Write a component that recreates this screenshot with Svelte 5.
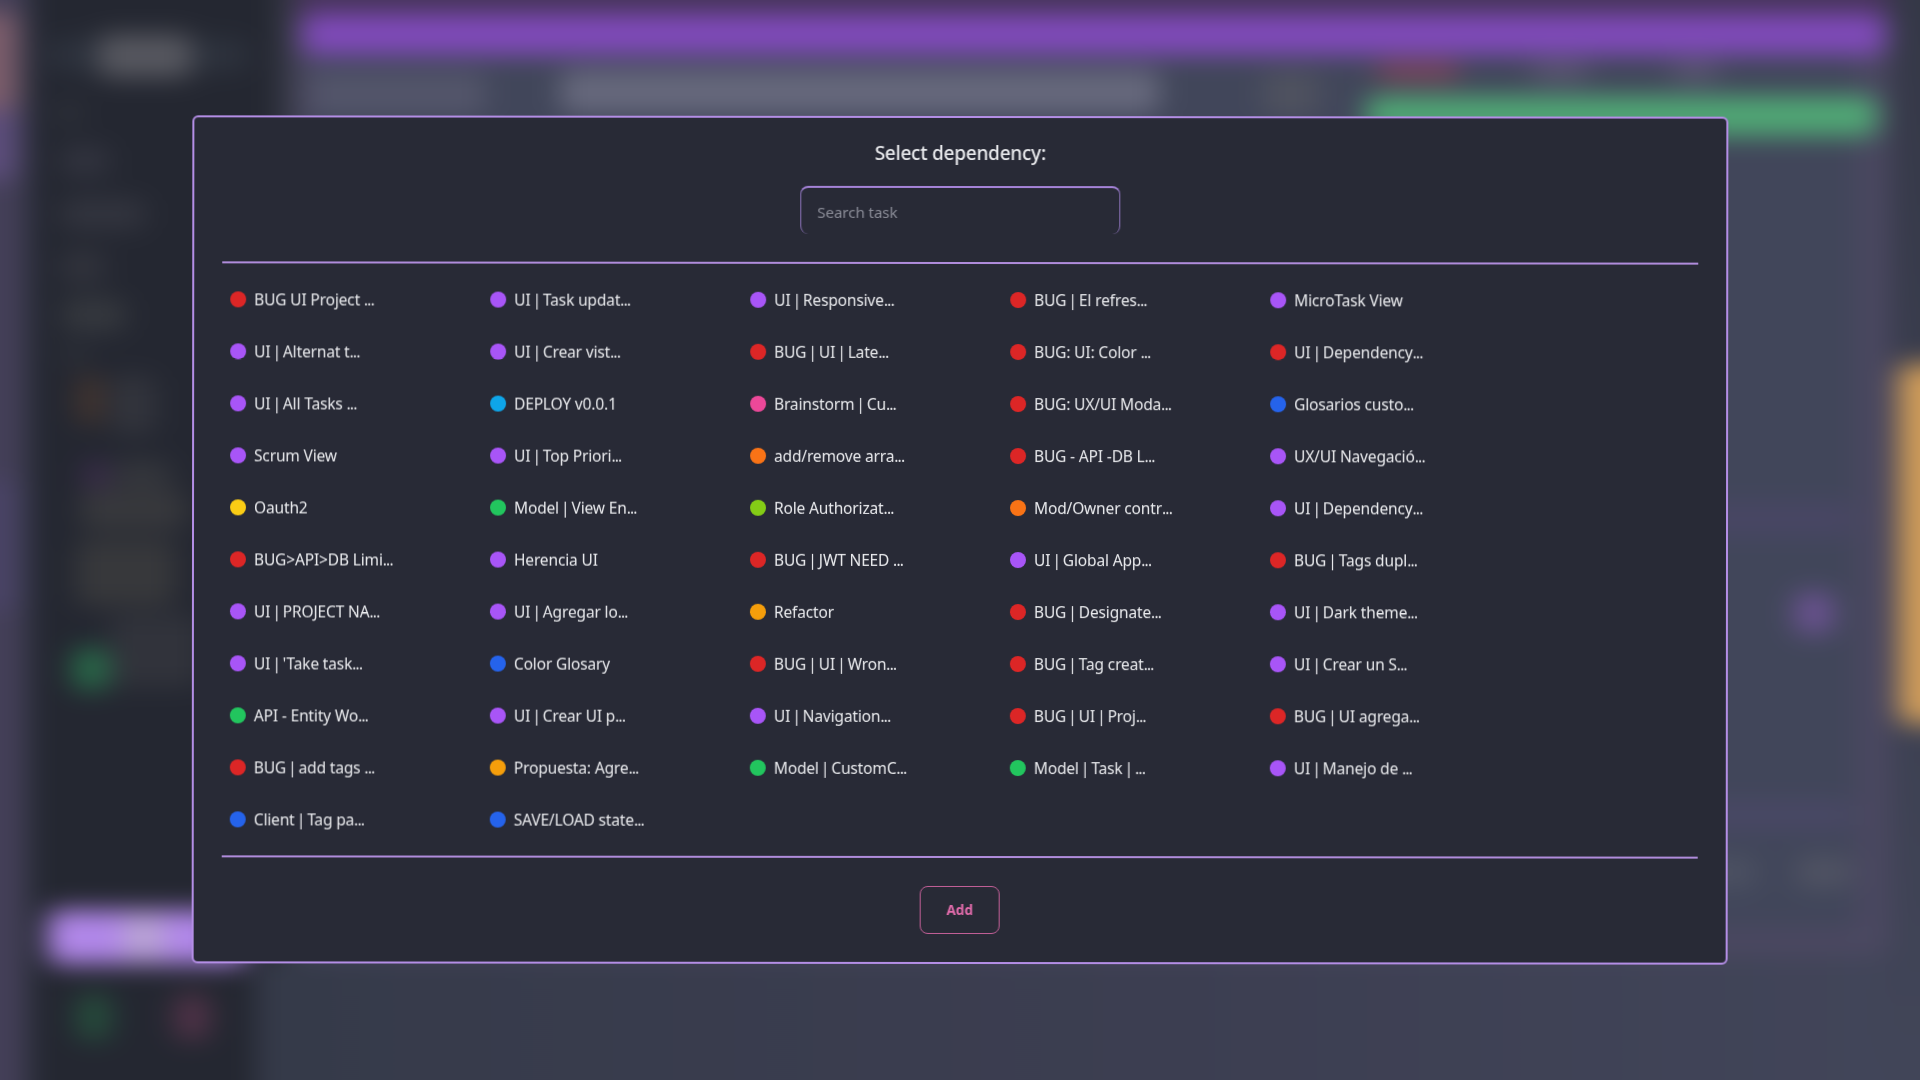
<script>
  const colors = {
    r: '#dc2626', p: '#a855f7', s: '#0ea5e9', k: '#ec4899', b: '#2563eb',
    o: '#f97316', y: '#facc15', g: '#22c55e', l: '#84cc16', a: '#f59e0b',
  };

  const tasks = [
    ['r', 'BUG UI Project ...'], ['p', 'UI | Task updat...'], ['p', 'UI | Responsive...'], ['r', 'BUG | El refres...'], ['p', 'MicroTask View'],
    ['p', 'UI | Alternat t...'], ['p', 'UI | Crear vist...'], ['r', 'BUG | UI | Late...'], ['r', 'BUG: UI: Color ...'], ['r', 'UI | Dependency...'],
    ['p', 'UI | All Tasks ...'], ['s', 'DEPLOY v0.0.1'], ['k', 'Brainstorm | Cu...'], ['r', 'BUG: UX/UI Moda...'], ['b', 'Glosarios custo...'],
    ['p', 'Scrum View'], ['p', 'UI | Top Priori...'], ['o', 'add/remove arra...'], ['r', 'BUG - API -DB L...'], ['p', 'UX/UI Navegació...'],
    ['y', 'Oauth2'], ['g', 'Model | View En...'], ['l', 'Role Authorizat...'], ['o', 'Mod/Owner contr...'], ['p', 'UI | Dependency...'],
    ['r', 'BUG>API>DB Limi...'], ['p', 'Herencia UI'], ['r', 'BUG | JWT NEED ...'], ['p', 'UI | Global App...'], ['r', 'BUG | Tags dupl...'],
    ['p', 'UI | PROJECT NA...'], ['p', 'UI | Agregar lo...'], ['a', 'Refactor'], ['r', 'BUG | Designate...'], ['p', 'UI | Dark theme...'],
    ['p', "UI | 'Take task..."], ['b', 'Color Glosary'], ['r', 'BUG | UI | Wron...'], ['r', 'BUG | Tag creat...'], ['p', 'UI | Crear un S...'],
    ['g', 'API - Entity Wo...'], ['p', 'UI | Crear UI p...'], ['p', 'UI | Navigation...'], ['r', 'BUG | UI | Proj...'], ['r', 'BUG | UI agrega...'],
    ['r', 'BUG | add tags ...'], ['a', 'Propuesta: Agre...'], ['g', 'Model | CustomC...'], ['g', 'Model | Task | ...'], ['p', 'UI | Manejo de ...'],
    ['b', 'Client | Tag pa...'], ['b', 'SAVE/LOAD state...'],
  ];

  // Separators and the trailing ellipsis are set tighter than the words
  const pieces = (label) => label.split(/(\||\.\.\.$)/).filter(Boolean);
  const kind = (piece) => (piece === '|' ? 'pipe' : piece === '...' ? 'more' : 'word');

  // Blurred shapes of the page behind the dialog: x, y, width, height, fill
  const shapes = [
    [-60, -60, 84, 1200, '#443f58'],
    [-60, 100, 78, 80, '#5c4d7b'],
    [-60, 12, 78, 98, '#7c5d6b'],
    [-60, 480, 80, 130, '#494365'],
    [30, -60, 248, 1240, '#242731'],
    [275, -60, 20, 1040, '#333642'],
    [48, 38, 200, 34, '#2d323d'],
    [98, 34, 94, 44, '#56575f'],
    [56, 100, 26, 26, '#2e313a'],
    [60, 145, 50, 32, '#31333e'],
    [60, 198, 86, 32, '#32343e'],
    [60, 250, 45, 34, '#31333c'],
    [62, 298, 64, 34, '#35383e'],
    [60, 345, 30, 20, '#2d3038'],
    [76, 375, 28, 50, '#41342f'],
    [112, 375, 44, 60, '#32343c'],
    [84, 460, 24, 30, '#3c2c4c'],
    [112, 460, 60, 28, '#34363c'],
    [80, 490, 106, 40, '#37383c'],
    [76, 540, 100, 66, '#37383b'],
    [110, 615, 90, 72, '#31333b'],
    [72, 648, 38, 42, '#286748'],
    [48, 910, 200, 54, '#b187e9'],
    [124, 916, 40, 42, '#b8a4d2'],
    [76, 994, 36, 46, '#254b3b'],
    [174, 994, 36, 46, '#4f3247'],
    [295, -60, 1595, 1016, '#4b4861'],
    [310, 40, 1548, 888, '#41465a'],
    [295, -60, 1595, 80, '#46345a'],
    [302, 14, 1584, 41, '#804aba'],
    [310, 72, 176, 44, '#53556a'],
    [560, 70, 600, 44, '#66687c'],
    [1262, 72, 58, 44, '#4f525f'],
    [1376, 62, 84, 20, '#7a455a'],
    [1530, 62, 60, 20, '#5a5670'],
    [1670, 62, 50, 20, '#5a5670'],
    [1366, 96, 512, 40, '#50a875'],
    [1700, 502, 152, 34, '#484664'],
    [1794, 592, 40, 42, '#69528f'],
    [1700, 800, 152, 30, '#494865'],
    [1700, 856, 56, 32, '#4c5162'],
    [1796, 856, 56, 32, '#505363'],
    [1898, 364, 90, 360, '#cf9c5a'],
  ];
</script>

<div class="page">
  <svg class="backdrop" viewBox="0 0 1920 1080" aria-hidden="true">
    <defs>
      <linearGradient id="base" x1="0" x2="1" y1="0" y2="0">
        <stop offset="0.12" stop-color="#353a49" />
        <stop offset="0.6" stop-color="#3c3e51" />
        <stop offset="1" stop-color="#42465a" />
      </linearGradient>
      <linearGradient id="edge" x1="0" x2="0" y1="0" y2="1">
        <stop offset="0" stop-color="#343746" />
        <stop offset="1" stop-color="#424659" />
      </linearGradient>
      <filter id="soft" filterUnits="userSpaceOnUse" x="-60" y="-60" width="2040" height="1200" color-interpolation-filters="sRGB">
        <feGaussianBlur stdDeviation="14 12" />
      </filter>
    </defs>
    <g filter="url(#soft)">
      <rect x="-60" y="-60" width="2040" height="1200" fill="url(#base)" />
      <rect x="1885" y="-60" width="95" height="1200" fill="url(#edge)" />
      {#each shapes as [x, y, w, h, fill]}
        <rect {x} {y} width={w} height={h} {fill} rx="12" />
      {/each}
      <rect x="256" y="962" width="80" height="200" fill="#353a49" />
    </g>
  </svg>

  <section class="dialog">
    <h1>Select dependency:</h1>
    <input type="text" placeholder="Search task" />
    <div class="list">
      {#each tasks as [c, label]}
        <div class="task">
          <span class="dot" style="background: {colors[c]}"></span>
          <span class="label">{#each pieces(label) as piece}<span class={kind(piece)}>{piece}</span>{/each}</span>
        </div>
      {/each}
    </div>
    <button>Add</button>
  </section>
</div>

<style>
  :global(body) { margin: 0; background: #353948; overflow: hidden; }

  .page {
    position: relative;
    box-sizing: border-box;
    width: 1920px;
    height: 1080px;
    padding: 116px 192px 0;
    overflow: hidden;
    font-family: 'Segoe UI', 'Noto Sans', 'Open Sans', sans-serif;
  }

  .backdrop { position: absolute; inset: 0; width: 1920px; height: 1080px; }

  .dialog {
    position: relative;
    box-sizing: border-box;
    width: 1536px;
    height: 848px;
    padding: 0 28px;
    display: flex;
    flex-direction: column;
    align-items: center;
    background: #282a36;
    border: 2px solid #b48ee6;
    border-radius: 6px;
    box-shadow: 0 0 8px rgba(0, 0, 0, 0.02);
    color: #e9eaed;
    transform: rotate(0.05deg);
    will-change: transform;
  }

  h1 {
    margin: 20px 0 0;
    font-size: 19px;
    line-height: 30px;
    font-weight: 500;
    letter-spacing: -0.23px;
    white-space: nowrap;
  }

  input {
    box-sizing: border-box;
    width: 320px;
    height: 48px;
    margin: 18px 0 28px;
    padding: 2px 16px 0;
    background: transparent;
    border: 1px solid #8b72b8;
    border-top: 2px solid #a583d8;
    border-bottom: 0 solid transparent;
    border-radius: 8px;
    font: 15.2px 'Segoe UI', 'Noto Sans', sans-serif;
    letter-spacing: -0.1px;
    color: #e6e7ea;
    outline: none;
  }

  input::placeholder { color: #8a8c97; opacity: 1; }

  .list {
    box-sizing: border-box;
    width: 1476px;
    height: 596px;
    padding: 10px 8px 0;
    display: grid;
    grid-template-columns: repeat(5, 260px);
    grid-auto-rows: 52px;
    border-top: 2px solid #b08cdc;
    border-bottom: 2px solid #b08cdc;
  }

  .task { display: flex; align-items: center; gap: 8px; }

  .dot { width: 16px; height: 16px; border-radius: 50%; flex: none; }

  .label {
    font-size: 15.5px;
    line-height: 24px;
    letter-spacing: -0.15px;
    white-space: pre;
    padding-bottom: 1px;
  }

  .pipe { margin: 0 -1.8px; }

  .more { letter-spacing: -0.8px; }

  button {
    box-sizing: border-box;
    width: 80px;
    height: 48px;
    margin-top: 28px;
    padding: 0 0 2px;
    background: transparent;
    border: 1px solid #c25f97;
    border-radius: 8px;
    color: #e26cac;
    font: 700 13.6px 'Segoe UI', 'Noto Sans', sans-serif;
  }
</style>
